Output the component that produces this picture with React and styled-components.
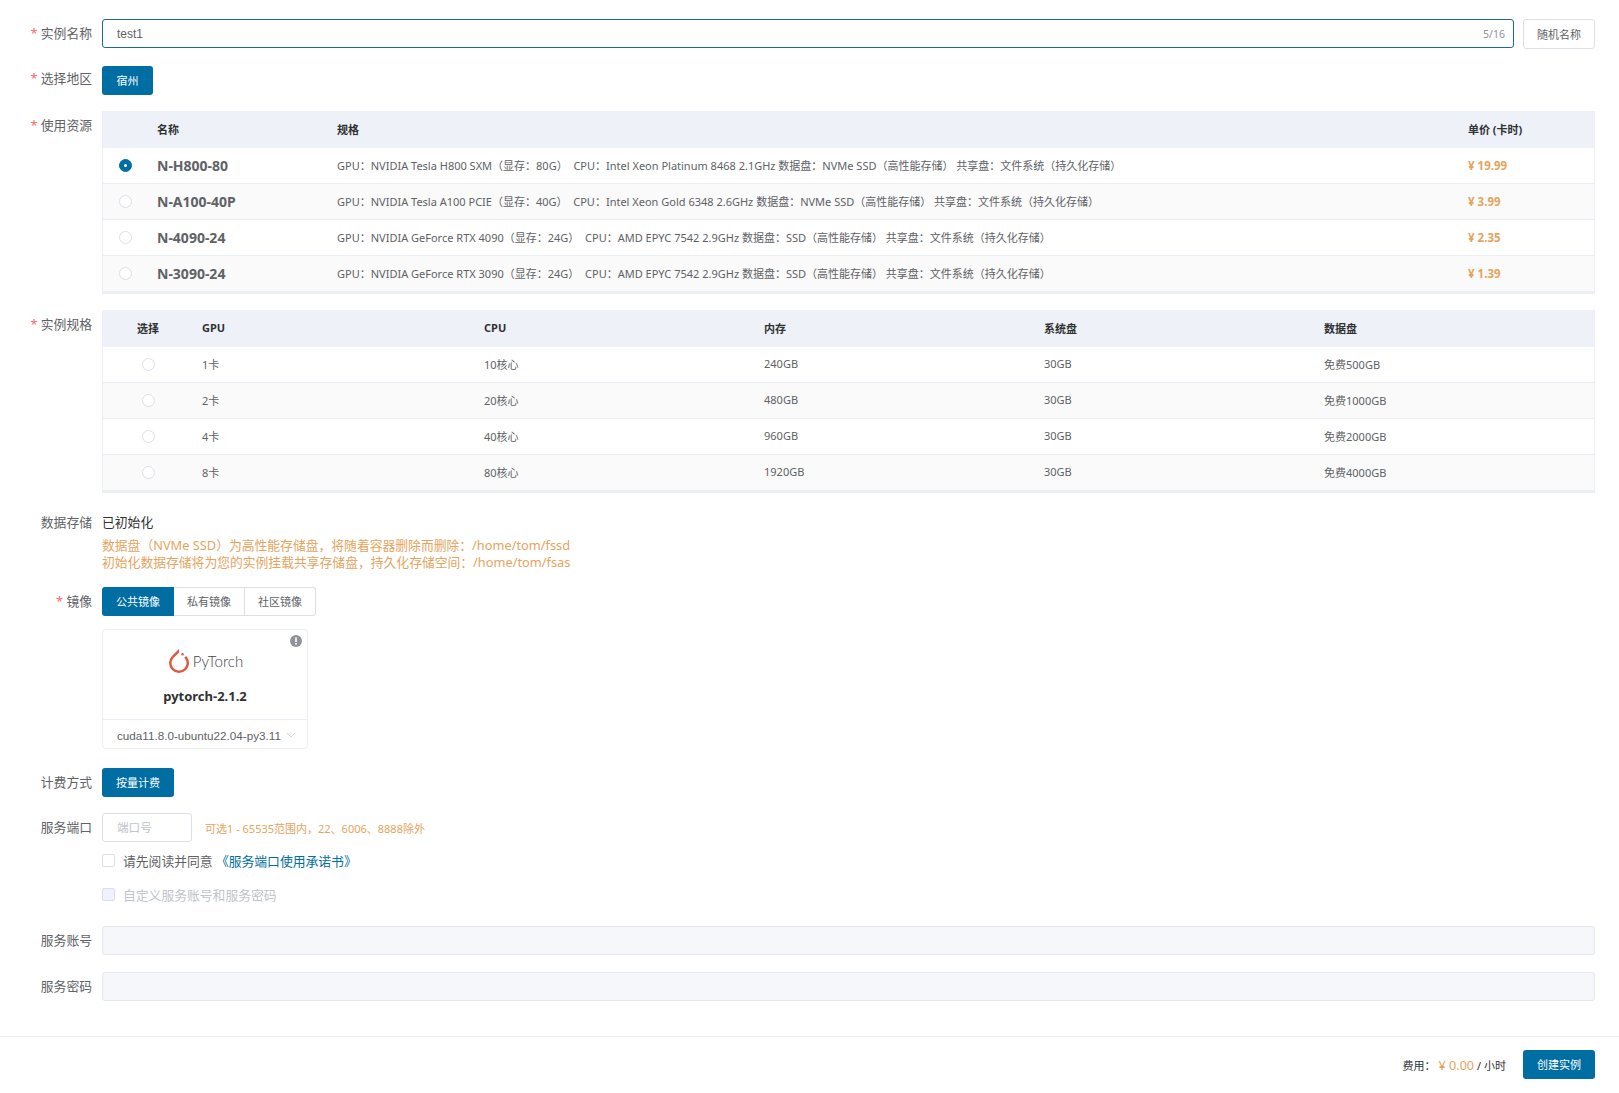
import React from 'react'
import styled, { createGlobalStyle } from 'styled-components'
import { SiPytorch } from 'react-icons/si'
import { ChevronDown } from 'lucide-react'

const PRIMARY = '#006ea3'
const ORANGE = '#e5a45e'
const TEXT = '#606266'
const HEADING = '#303133'
const LINE = '#ebeef5'

const GlobalStyle = createGlobalStyle`
    body {
        margin: 0;
        background: #fff;
        color: ${TEXT};
        font-family: 'Noto Sans', 'Noto Sans CJK SC', sans-serif;
    }
`

const Page = styled.div`
    width: 1619px;
    height: 1093px;
    box-sizing: border-box;
    padding-top: 19px;
    display: flex;
    flex-direction: column;
    overflow: hidden;
`

const Form = styled.div`
    flex: 1;
    padding-right: 24px;
`

const Row = styled.div`
    display: grid;
    grid-template-columns: 92px 1fr;
    column-gap: 10px;
    margin-bottom: ${props => props.$gap || 0}px;
`

const Label = styled.div`
    font-size: 12.8px;
    line-height: 18px;
    padding-top: ${props => props.$top || 5}px;
    text-align: right;
    color: ${TEXT};
    white-space: nowrap;
    &::before {
        content: ${props => (props.$required ? "'* '" : "''")};
        color: #f56c6c;
    }
`

const Field = styled.div`
    min-width: 0;
`

const NameLine = styled.div`
    display: flex;
    gap: 9px;
`

const NameBox = styled.div`
    flex: 1;
    height: 29px;
    box-sizing: border-box;
    border: 1px solid #1c6a92;
    border-radius: 3px;
    display: flex;
    align-items: center;
    padding: 0 8px 0 14px;
`

const NameInput = styled.input`
    flex: 1;
    border: none;
    outline: none;
    padding: 0;
    background: transparent;
    font-family: 'Liberation Sans', 'Noto Sans CJK SC', sans-serif;
    font-size: 12px;
    color: ${TEXT};
`

const Counter = styled.span`
    font-size: 10.5px;
    color: #909399;
`

const PlainButton = styled.button`
    width: 72px;
    height: 30px;
    box-sizing: border-box;
    border: 1px solid #dcdfe6;
    border-radius: 3px;
    background: #fff;
    color: ${TEXT};
    font-family: inherit;
    font-size: 11px;
    padding: 0;
`

const SolidButton = styled.button`
    width: ${props => props.$width}px;
    height: 29px;
    border: none;
    border-radius: 3px;
    background: ${PRIMARY};
    color: #fff;
    font-family: inherit;
    font-size: 11px;
    padding: 0 0 2px;
`

const Table = styled.div`
    border-left: 1px solid ${LINE};
    border-right: 1px solid ${LINE};
    border-bottom: 2px solid ${LINE};
`

const TableRow = styled.div`
    display: grid;
    grid-template-columns: ${props => props.$columns};
    align-items: center;
    box-sizing: border-box;
    height: ${props => (props.$head ? 37 : 36)}px;
    border-bottom: ${props => (props.$head ? 'none' : `1px solid ${LINE}`)};
    background: ${props => (props.$head ? '#eef1f8' : props.$alt ? '#fafafa' : '#fff')};
    font-size: 11px;
    white-space: nowrap;
`

const Cell = styled.div`
    padding-bottom: 2px;
`

const HeadCell = styled(Cell)`
    font-weight: 700;
    color: ${HEADING};
    text-align: ${props => (props.$center ? 'center' : 'left')};
    padding-right: ${props => (props.$center ? 9 : 0)}px;
`

const Radio = styled.span`
    width: 13px;
    height: 13px;
    box-sizing: border-box;
    margin-left: ${props => props.$left}px;
    border-radius: 50%;
    border: 1px solid ${props => (props.$checked ? PRIMARY : '#dcdfe6')};
    background: ${props => (props.$checked ? PRIMARY : '#fff')};
    display: flex;
    align-items: center;
    justify-content: center;
    &::after {
        content: '';
        width: 3px;
        height: 3px;
        border-radius: 50%;
        background: ${props => (props.$checked ? '#fff' : 'transparent')};
    }
`

const ResourceName = styled.div`
    font-size: 14px;
    font-weight: 700;
    color: ${TEXT};
`

const Price = styled.div`
    font-size: 11.5px;
    font-weight: 700;
    color: ${ORANGE};
`

const Storage = styled.div`
    font-size: 12.8px;
    line-height: 18px;
    padding-top: 5px;
    color: ${HEADING};
`

const StorageNote = styled.div`
    margin-top: 6px;
    font-size: 12.8px;
    line-height: 16.5px;
    color: ${ORANGE};
`

const Tabs = styled.div`
    display: inline-flex;
    height: 29px;
`

const Tab = styled.div`
    width: ${props => (props.$active ? 72 : 71)}px;
    box-sizing: border-box;
    padding-bottom: 2px;
    display: flex;
    align-items: center;
    justify-content: center;
    font-size: 11px;
    color: ${props => (props.$active ? '#fff' : TEXT)};
    background: ${props => (props.$active ? PRIMARY : '#fff')};
    border: ${props => (props.$active ? 'none' : '1px solid #dcdfe6')};
    border-left: none;
    border-radius: ${props => (props.$active ? '3px 0 0 3px' : props.$last ? '0 3px 3px 0' : '0')};
`

const ImageCard = styled.div`
    position: relative;
    width: 206px;
    height: 120px;
    box-sizing: border-box;
    margin-top: 13px;
    border: 1px solid ${LINE};
    border-radius: 4px;
    display: flex;
    flex-direction: column;
`

const CardBody = styled.div`
    flex: 1;
    display: flex;
    flex-direction: column;
    align-items: center;
    padding-top: 19px;
    box-sizing: border-box;
`

const InfoBadge = styled.svg`
    position: absolute;
    top: 5px;
    right: 5px;
    width: 12px;
    height: 12px;
`

const Logo = styled.div`
    display: flex;
    align-items: center;
    gap: 2px;
    height: 24px;
`

const LogoText = styled.span`
    font-family: Lato, sans-serif;
    font-weight: 300;
    font-size: 15px;
    color: #444;
`

const ImageName = styled.div`
    margin-top: 14px;
    font-size: 13px;
    line-height: 18px;
    font-weight: 700;
    color: ${HEADING};
`

const CardSelect = styled.div`
    height: 29px;
    border-top: 1px solid ${LINE};
    box-sizing: border-box;
    display: flex;
    align-items: center;
    justify-content: space-between;
    padding: 2px 8px 0 14px;
    font-family: 'Liberation Sans', sans-serif;
    font-size: 11.7px;
    color: ${TEXT};
    white-space: nowrap;
`

const PortLine = styled.div`
    display: flex;
    align-items: center;
    gap: 13px;
`

const PortInput = styled.input`
    width: 90px;
    height: 29px;
    box-sizing: border-box;
    border: 1px solid #dcdfe6;
    border-radius: 3px;
    padding: 0 14px;
    font-family: inherit;
    font-size: 11.6px;
    outline: none;
    &::placeholder {
        color: #c0c4cc;
    }
`

const Hint = styled.span`
    font-size: 11px;
    color: ${ORANGE};
`

const CheckLine = styled.div`
    display: flex;
    align-items: center;
    gap: 8px;
    height: 18px;
    margin-top: ${props => props.$top}px;
    font-size: 12.8px;
    color: ${props => (props.$disabled ? '#c0c4cc' : TEXT)};
`

const CheckBox = styled.span`
    width: 13px;
    height: 13px;
    box-sizing: border-box;
    border: 1px solid #dcdfe6;
    border-radius: 2px;
    background: ${props => (props.$disabled ? '#edf2fc' : '#fff')};
`

const TermsLink = styled.a`
    color: ${PRIMARY};
    text-decoration: none;
`

const DisabledInput = styled.div`
    height: 29px;
    box-sizing: border-box;
    border: 1px solid #e4e7ed;
    border-radius: 3px;
    background: #f5f7fa;
`

const Footer = styled.div`
    box-sizing: border-box;
    height: 57px;
    border-top: 1px solid ${LINE};
    padding: 13px 24px 0 0;
    display: flex;
    justify-content: flex-end;
    align-items: flex-start;
    gap: 17px;
`

const Cost = styled.div`
    display: flex;
    align-items: baseline;
    height: 29px;
    line-height: 31px;
    font-size: 11px;
    color: ${HEADING};
    white-space: nowrap;
`

const CostValue = styled.span`
    margin-left: 3px;
    margin-right: 3px;
    font-size: 12.6px;
    color: ${ORANGE};
`

const RESOURCE_COLUMNS = '54px 180px 1131px 1fr'
const SPEC_COLUMNS = '99px 282px 280px 280px 280px 1fr'

const resources = [
    {
        name: 'N-H800-80',
        spec: 'GPU：NVIDIA Tesla H800 SXM（显存：80G） \u00a0CPU：Intel Xeon Platinum 8468 2.1GHz 数据盘：NVMe SSD（高性能存储） 共享盘：文件系统（持久化存储）',
        price: '¥ 19.99',
    },
    {
        name: 'N-A100-40P',
        spec: 'GPU：NVIDIA Tesla A100 PCIE（显存：40G） \u00a0CPU：Intel Xeon Gold 6348 2.6GHz 数据盘：NVMe SSD（高性能存储） 共享盘：文件系统（持久化存储）',
        price: '¥ 3.99',
    },
    {
        name: 'N-4090-24',
        spec: 'GPU：NVIDIA GeForce RTX 4090（显存：24G） \u00a0CPU：AMD EPYC 7542 2.9GHz 数据盘：SSD（高性能存储） 共享盘：文件系统（持久化存储）',
        price: '¥ 2.35',
    },
    {
        name: 'N-3090-24',
        spec: 'GPU：NVIDIA GeForce RTX 3090（显存：24G） \u00a0CPU：AMD EPYC 7542 2.9GHz 数据盘：SSD（高性能存储） 共享盘：文件系统（持久化存储）',
        price: '¥ 1.39',
    },
]

const specs = [
    { gpu: '1卡', cpu: '10核心', memory: '240GB', system: '30GB', data: '免费500GB' },
    { gpu: '2卡', cpu: '20核心', memory: '480GB', system: '30GB', data: '免费1000GB' },
    { gpu: '4卡', cpu: '40核心', memory: '960GB', system: '30GB', data: '免费2000GB' },
    { gpu: '8卡', cpu: '80核心', memory: '1920GB', system: '30GB', data: '免费4000GB' },
]

export default function App() {
    return (
        <Page>
            <GlobalStyle />
            <Form>
                <Row $gap={17}>
                    <Label $required>实例名称</Label>
                    <NameLine>
                        <NameBox>
                            <NameInput value="test1" readOnly />
                            <Counter>5/16</Counter>
                        </NameBox>
                        <PlainButton>随机名称</PlainButton>
                    </NameLine>
                </Row>
                <Row $gap={16}>
                    <Label $required $top={3}>选择地区</Label>
                    <Field>
                        <SolidButton $width={51}>宿州</SolidButton>
                    </Field>
                </Row>
                <Row $gap={16}>
                    <Label $required>使用资源</Label>
                    <Table>
                        <TableRow $head $columns={RESOURCE_COLUMNS}>
                            <span />
                            <HeadCell>名称</HeadCell>
                            <HeadCell>规格</HeadCell>
                            <HeadCell>单价 (卡时)</HeadCell>
                        </TableRow>
                        {resources.map((item, index) => (
                            <TableRow key={item.name} $alt={index % 2 === 1} $columns={RESOURCE_COLUMNS}>
                                <Radio $left={16} $checked={index === 0} />
                                <ResourceName>{item.name}</ResourceName>
                                <Cell>{item.spec}</Cell>
                                <Price>{item.price}</Price>
                            </TableRow>
                        ))}
                    </Table>
                </Row>
                <Row $gap={15}>
                    <Label $required>实例规格</Label>
                    <Table>
                        <TableRow $head $columns={SPEC_COLUMNS}>
                            <HeadCell $center>选择</HeadCell>
                            <HeadCell>GPU</HeadCell>
                            <HeadCell>CPU</HeadCell>
                            <HeadCell>内存</HeadCell>
                            <HeadCell>系统盘</HeadCell>
                            <HeadCell>数据盘</HeadCell>
                        </TableRow>
                        {specs.map((item, index) => (
                            <TableRow key={item.gpu} $alt={index % 2 === 1} $columns={SPEC_COLUMNS}>
                                <Radio $left={39} />
                                <Cell>{item.gpu}</Cell>
                                <Cell>{item.cpu}</Cell>
                                <Cell>{item.memory}</Cell>
                                <Cell>{item.system}</Cell>
                                <Cell>{item.data}</Cell>
                            </TableRow>
                        ))}
                    </Table>
                </Row>
                <Row $gap={17}>
                    <Label>数据存储</Label>
                    <Field>
                        <Storage>已初始化</Storage>
                        <StorageNote>
                            数据盘（NVMe SSD）为高性能存储盘，将随着容器删除而删除：/home/tom/fssd
                            <br />
                            初始化数据存储将为您的实例挂载共享存储盘，持久化存储空间：/home/tom/fsas
                        </StorageNote>
                    </Field>
                </Row>
                <Row $gap={19}>
                    <Label $required>镜像</Label>
                    <Field>
                        <Tabs>
                            <Tab $active>公共镜像</Tab>
                            <Tab>私有镜像</Tab>
                            <Tab $last>社区镜像</Tab>
                        </Tabs>
                        <ImageCard>
                            <InfoBadge viewBox="0 0 12 12">
                                <circle cx="6" cy="6" r="6" fill="#909399" />
                                <rect x="5.2" y="2.5" width="1.6" height="4.5" fill="#fff" />
                                <rect x="5.2" y="8" width="1.6" height="1.6" fill="#fff" />
                            </InfoBadge>
                            <CardBody>
                                <Logo>
                                    <SiPytorch size={24} color="#de5a43" />
                                    <LogoText>PyTorch</LogoText>
                                </Logo>
                                <ImageName>pytorch-2.1.2</ImageName>
                            </CardBody>
                            <CardSelect>
                                cuda11.8.0-ubuntu22.04-py3.11
                                <ChevronDown size={16} strokeWidth={1} color="#c0c4cc" />
                            </CardSelect>
                        </ImageCard>
                    </Field>
                </Row>
                <Row $gap={16}>
                    <Label>计费方式</Label>
                    <Field>
                        <SolidButton $width={72}>按量计费</SolidButton>
                    </Field>
                </Row>
                <Row $gap={23}>
                    <Label>服务端口</Label>
                    <Field>
                        <PortLine>
                            <PortInput placeholder="端口号" />
                            <Hint>可选1 - 65535范围内，22、6006、8888除外</Hint>
                        </PortLine>
                        <CheckLine $top={9}>
                            <CheckBox />
                            <span>
                                请先阅读并同意 <TermsLink href="#">《服务端口使用承诺书》</TermsLink>
                            </span>
                        </CheckLine>
                        <CheckLine $top={16} $disabled>
                            <CheckBox $disabled />
                            <span>自定义服务账号和服务密码</span>
                        </CheckLine>
                    </Field>
                </Row>
                <Row $gap={17}>
                    <Label>服务账号</Label>
                    <DisabledInput />
                </Row>
                <Row>
                    <Label>服务密码</Label>
                    <DisabledInput />
                </Row>
            </Form>
            <Footer>
                <Cost>
                    费用：
                    <CostValue>¥ 0.00</CostValue>/ 小时
                </Cost>
                <SolidButton $width={72}>创建实例</SolidButton>
            </Footer>
        </Page>
    )
}
